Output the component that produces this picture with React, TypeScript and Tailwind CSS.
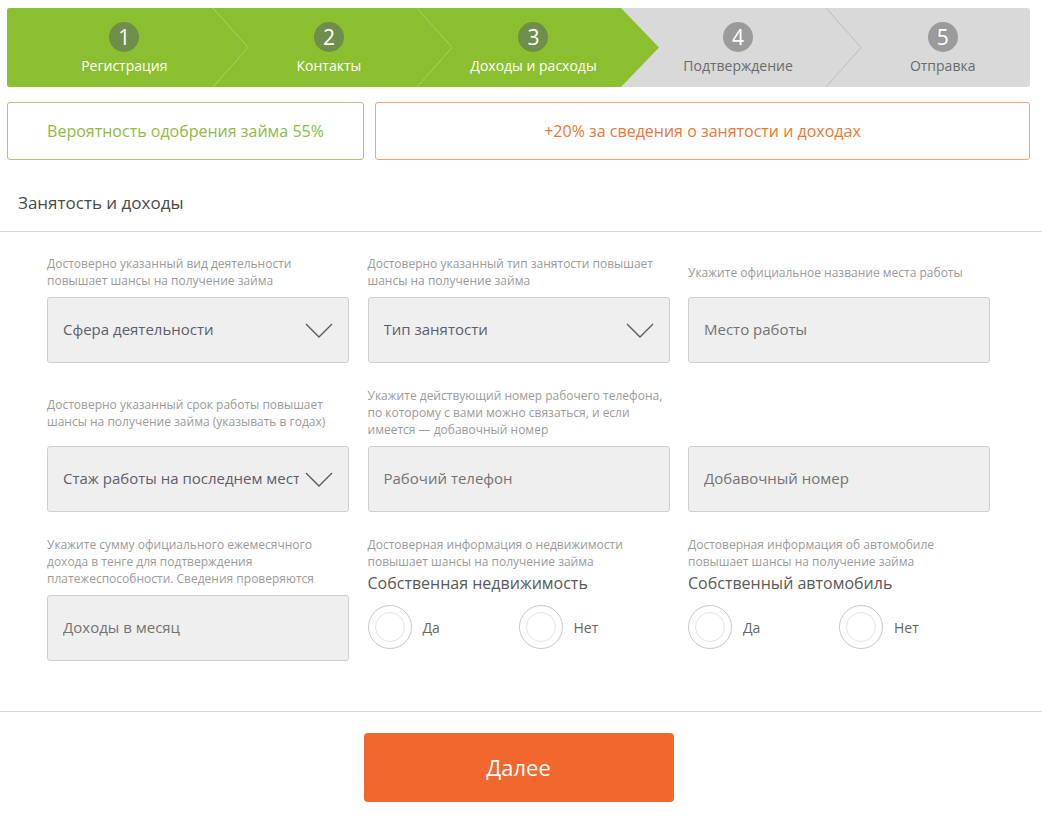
import React from "react";

const steps = [
  { n: 1, label: "Регистрация", done: true },
  { n: 2, label: "Контакты", done: true },
  { n: 3, label: "Доходы и расходы", done: true },
  { n: 4, label: "Подтверждение", done: false },
  { n: 5, label: "Отправка", done: false },
];

function StepBar() {
  return (
    <div className="ml-[7px] mr-[12px] mt-[8px] h-[79px] flex rounded-[3px] bg-[#d9d9d9] overflow-hidden">
      {steps.map((s, i) => {
        const current = s.done && !steps[i + 1]?.done;
        return (
          <div
            key={s.n}
            className={`relative flex-1 flex flex-col items-center pt-[14px] pl-[30px] ${s.done ? "bg-[#8cbf2f]" : ""}`}
          >
            <div
              className={`relative z-[3] w-[30px] h-[30px] rounded-full flex items-center justify-center text-white text-[21px] leading-none ${
                s.done ? "bg-[#6f8d4b]" : "bg-[#9b9b9b]"
              }`}
            >
              {s.n}
            </div>
            <div
              className={`relative z-[3] mt-[4px] text-[14px] leading-[20px] whitespace-nowrap ${
                s.done ? "text-white" : "text-[#6a6a6a]"
              }`}
            >
              {s.label}
            </div>

            {i < 4 && (
              <svg
                className="absolute top-0 left-full z-[2]"
                width="40"
                height="79"
                viewBox="0 0 40 79"
              >
                {current ? (
                  <polygon points="0,0 38,39.5 0,79" fill="#8cbf2f" />
                ) : (
                  <polyline
                    points="1,0 36,39.5 1,79"
                    fill="none"
                    stroke={s.done ? "#a9d262" : "#bcbcbc"}
                    strokeWidth="1"
                  />
                )}
              </svg>
            )}
          </div>
        );
      })}
    </div>
  );
}

function Chevron() {
  return (
    <svg width="28" height="15" viewBox="0 0 28 15" className="shrink-0">
      <polyline points="1,1 14,14 27,1" fill="none" stroke="#5a5a5a" strokeWidth="1.4" />
    </svg>
  );
}

function Field({ text, select }: { text: string; select?: boolean }) {
  return (
    <div className="h-[66px] rounded-[3px] border border-[#cfcfcf] bg-[#efefef] flex items-center pl-[15px] pr-[15px] overflow-hidden">
      <span
        className={`flex-1 min-w-0 mr-[6px] whitespace-nowrap overflow-hidden text-[15px] leading-[20px] -mt-[2px] ${
          select ? "text-[#5d5d6d]" : "text-[#737373]"
        }`}
      >
        {text}
      </span>
      {select && <Chevron />}
    </div>
  );
}

function Help({ lines }: { lines: string[] }) {
  return (
    <div className="flex items-center">
      <p className="text-[12px] leading-[17px] text-[#9b9b9b] whitespace-nowrap">
        {lines.map((l, i) => (
          <React.Fragment key={i}>
            {l}
            {i < lines.length - 1 && <br />}
          </React.Fragment>
        ))}
      </p>
    </div>
  );
}

function Radio({ label }: { label: string }) {
  return (
    <div className="w-[151px] flex items-center gap-[11px]">
      <div className="w-[44px] h-[44px] rounded-full border border-[#c9c9c9] flex items-center justify-center">
        <div className="w-[30px] h-[30px] rounded-full border border-[#e3e3e3]" />
      </div>
      <span className="text-[14px] text-[#666]">{label}</span>
    </div>
  );
}

function Ownership({ help, title }: { help: string[]; title: string }) {
  return (
    <div className="flex flex-col">
      <Help lines={help} />
      <div className="mt-[2px] text-[16px] leading-[22px] text-[#5a5a5a]">{title}</div>
      <div className="mt-[11px] flex">
        <Radio label="Да" />
        <Radio label="Нет" />
      </div>
    </div>
  );
}

export default function App() {
  return (
    <div className="w-[1042px] h-[816px] bg-white overflow-hidden" style={{ fontFamily: "'Open Sans', 'Noto Sans', sans-serif" }}>
      <StepBar />

      <div className="ml-[7px] mr-[12px] mt-[15px] flex gap-[11px]">
        <div className="w-[357px] h-[58px] rounded-[3px] border border-[#b4c07e] flex items-center justify-center text-[16px] text-[#8dbb45]">
          Вероятность одобрения займа 55%
        </div>
        <div className="flex-1 h-[58px] rounded-[3px] border border-[#eba77c] flex items-center justify-center text-[16px] text-[#ee7735]">
          +20% за сведения о занятости и доходах
        </div>
      </div>

      <div className="pl-[18px] pt-[31px] pb-[16px] text-[17px] leading-[24px] text-[#4a4a4a]">
        Занятость и доходы
      </div>
      <div className="h-px bg-[#d6d6d6]" />

      <div className="pl-[47px] pt-[23px] pb-[50px] flex flex-col gap-[24px]">
        <div className="grid grid-cols-[302px_302px_302px] gap-x-[18.5px] gap-y-[8px]">
          <Help lines={["Достоверно указанный вид деятельности", "повышает шансы на получение займа"]} />
          <Help lines={["Достоверно указанный тип занятости повышает", "шансы на получение займа"]} />
          <Help lines={["Укажите официальное название места работы"]} />
          <Field text="Сфера деятельности" select />
          <Field text="Тип занятости" select />
          <Field text="Место работы" />
        </div>

        <div className="grid grid-cols-[302px_302px_302px] gap-x-[18.5px] gap-y-[8px]">
          <Help lines={["Достоверно указанный срок работы повышает", "шансы на получение займа (указывать в годах)"]} />
          <Help
            lines={[
              "Укажите действующий номер рабочего телефона,",
              "по которому с вами можно связаться, и если",
              "имеется — добавочный номер",
            ]}
          />
          <div />
          <Field text="Стаж работы на последнем месте" select />
          <Field text="Рабочий телефон" />
          <Field text="Добавочный номер" />
        </div>

        <div className="grid grid-cols-[302px_302px_302px] gap-x-[18.5px] items-start">
          <div className="flex flex-col gap-[8px]">
            <Help
              lines={[
                "Укажите сумму официального ежемесячного",
                "дохода в тенге для подтверждения",
                "платежеспособности. Сведения проверяются",
              ]}
            />
            <Field text="Доходы в месяц" />
          </div>
          <Ownership
            help={["Достоверная информация о недвижимости", "повышает шансы на получение займа"]}
            title="Собственная недвижимость"
          />
          <Ownership
            help={["Достоверная информация об автомобиле", "повышает шансы на получение займа"]}
            title="Собственный автомобиль"
          />
        </div>
      </div>

      <div className="h-px bg-[#d6d6d6]" />

      <div className="flex justify-center pt-[21px]">
        <button
          type="button"
          className="mr-[5px] w-[310px] h-[69px] rounded-[4px] bg-[#f2672d] text-white text-[22px]"
        >
          Далее
        </button>
      </div>
    </div>
  );
}
